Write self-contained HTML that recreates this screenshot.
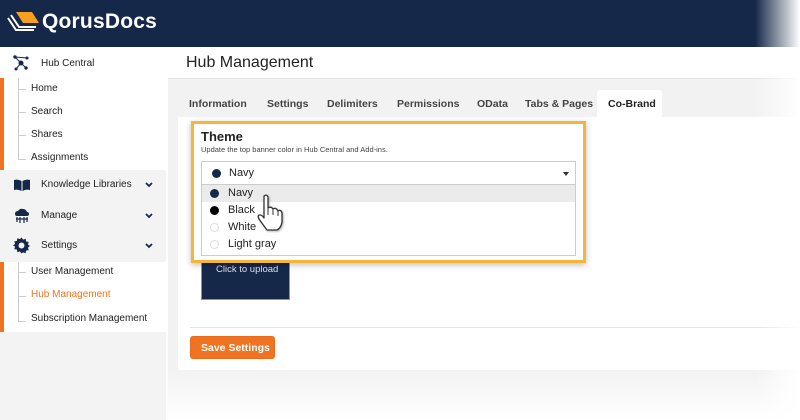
<!DOCTYPE html>
<html><head><style>
*{margin:0;padding:0;box-sizing:border-box}
body{width:800px;height:420px;overflow:hidden;background:#fff;font-family:"Liberation Sans",sans-serif;position:relative;color:#222}
.hdr{position:absolute;left:0;top:0;width:800px;height:47px;background:#15284a}
.fade{position:absolute;top:0;right:0;width:45px;height:420px;background:linear-gradient(to right,rgba(255,255,255,0),#fff);z-index:10}
.logo{position:absolute;left:42px;top:10px;color:#fff;font-size:21px;font-weight:bold;letter-spacing:.2px}
.side{position:absolute;left:0;top:48px;width:166px;height:372px;background:#f3f3f3}
.main{position:absolute;left:168px;top:48px;width:632px;height:372px;background:#f2f2f2}
.t{position:absolute;font-size:11px;color:#222;white-space:nowrap}
.side .t{font-size:10px}
.sub{position:absolute;left:0;width:166px;background:#fff}
.bar{position:absolute;left:0;width:4px;background:#f07322}
.vl{position:absolute;left:18px;width:1px;background:#ccc}
.hl{position:absolute;left:18px;width:8px;height:1px;background:#ccc}
.chev{position:absolute;left:145px}
.tab{position:absolute;top:98px;font-size:10.5px;font-weight:bold;color:#444}
.dot{position:absolute;width:9px;height:9px;border-radius:50%}
</style></head><body>
<div class="hdr"></div>
<svg style="position:absolute;left:6px;top:10px" width="34" height="26" viewBox="0 0 34 26">
<path d="M2 8 L10 20 L28 20" stroke="#fff" stroke-width="2" fill="none"/>
<path d="M5 5 L13 17 L30 17" stroke="#fff" stroke-width="2" fill="none"/>
<path d="M10 2 L26 2 L33 13 L17 13 Z" fill="#f5a021"/>
</svg>
<div class="logo">QorusDocs</div>

<div class="side">
 <div class="sub" style="top:0;height:30px"></div>
 <svg style="position:absolute;left:13px;top:7px" width="16" height="16" viewBox="0 0 16 16"><g fill="#15284a"><circle cx="8" cy="8" r="2.5"/><circle cx="2" cy="2" r="1.7"/><circle cx="14" cy="3" r="1.5"/><circle cx="3" cy="14" r="1.5"/><circle cx="13" cy="13" r="1.7"/></g><path d="M2 2L14 3M8 8L3 14M8 8L13 13M8 8L2 2" stroke="#15284a" stroke-width="1"/></svg>
 <div class="t" style="left:41px;top:10px">Hub Central</div>
 <div class="sub" style="top:30px;height:92px"></div>
 <div class="bar" style="top:30px;height:92px"></div>
 <div class="vl" style="top:30px;height:82px"></div>
 <div class="hl" style="top:41px"></div><div class="hl" style="top:64px"></div><div class="hl" style="top:87px"></div><div class="hl" style="top:111px"></div>
 <div class="t" style="left:31px;top:35px">Home</div>
 <div class="t" style="left:31px;top:58px">Search</div>
 <div class="t" style="left:31px;top:81px">Shares</div>
 <div class="t" style="left:31px;top:104px">Assignments</div>
 <svg style="position:absolute;left:14px;top:131px" width="16" height="12"><path d="M0 1 Q4 0 7.5 2 L7.5 12 Q4 10 0 11Z M16 1 Q12 0 8.5 2 L8.5 12 Q12 10 16 11Z" fill="#15284a"/></svg>
 <div class="t" style="left:41px;top:131px">Knowledge Libraries</div><svg class="chev" style="top:134px" width="8" height="6"><path d="M1 1L4 4L7 1" stroke="#15284a" stroke-width="1.8" fill="none"/></svg>
 <svg style="position:absolute;left:14px;top:160px" width="16" height="16"><path d="M3 8 Q1 8 1 6 Q1 3 4 3 Q6 0 9 1 Q12 1 13 4 Q15 4 15 6 Q15 8 13 8Z" fill="#15284a"/><path d="M3 9V14M6 9V15M10 9V15M13 9V14M2 11H14" stroke="#15284a" stroke-width="1.2"/></svg>
 <div class="t" style="left:41px;top:162px">Manage</div><svg class="chev" style="top:165px" width="8" height="6"><path d="M1 1L4 4L7 1" stroke="#15284a" stroke-width="1.8" fill="none"/></svg>
 <svg style="position:absolute;left:13px;top:189px" width="17" height="17" viewBox="0 0 16 16"><path d="M8 0.5l1.5 2 2.4-.8.4 2.5 2.5.4-.8 2.4 2 1.5-2 1.5.8 2.4-2.5.4-.4 2.5-2.4-.8L8 15.5l-1.5-2-2.4.8-.4-2.5-2.5-.4.8-2.4L0 8l2-1.5-.8-2.4 2.5-.4.4-2.5 2.4.8Z" fill="#15284a"/><circle cx="8" cy="8" r="2.8" fill="#f3f3f3"/></svg>
 <div class="t" style="left:41px;top:192px">Settings</div><svg class="chev" style="top:195px" width="8" height="6"><path d="M1 1L4 4L7 1" stroke="#15284a" stroke-width="1.8" fill="none"/></svg>
 <div class="sub" style="top:214px;height:70px"></div>
 <div class="bar" style="top:214px;height:70px"></div>
 <div class="vl" style="top:214px;height:60px"></div>
 <div class="hl" style="top:224px"></div><div class="hl" style="top:248px"></div><div class="hl" style="top:273px"></div>
 <div class="t" style="left:31px;top:218px">User Management</div>
 <div class="t" style="left:31px;top:241px;color:#f07322">Hub Management</div>
 <div class="t" style="left:31px;top:265px">Subscription Management</div>
</div>

<div class="main">
 <div style="position:absolute;left:0;top:0;width:632px;height:30px;background:#fff"></div>
 <div style="position:absolute;left:0;top:30px;width:632px;height:1px;background:#e3e3e3"></div>
 <div class="t" style="left:18px;top:6px;font-size:16px;color:#222">Hub Management</div>
 <div style="position:absolute;left:429px;top:42px;width:65px;height:28px;background:#fff;border-radius:3px 3px 0 0"></div>
 <div style="position:absolute;left:10px;top:69px;width:622px;height:253px;background:#fff;border-radius:0 0 3px 3px"></div>
 <div style="position:absolute;left:0;top:322px;width:632px;height:50px;background:linear-gradient(#f2f2f2,#fff)"></div>
</div>
<div class="tab" style="left:189px">Information</div>
<div class="tab" style="left:267px">Settings</div>
<div class="tab" style="left:327px">Delimiters</div>
<div class="tab" style="left:397px">Permissions</div>
<div class="tab" style="left:477px">OData</div>
<div class="tab" style="left:525px">Tabs &amp; Pages</div>
<div class="tab" style="left:608px;color:#222">Co-Brand</div>

<div style="position:absolute;left:201px;top:250px;width:89px;height:50px;background:#15284a;border:1px solid #8a94a8"></div>
<div class="t" style="left:216px;top:264px;font-size:9.5px;color:#dfe3ea">Click to upload</div>

<div style="position:absolute;left:191px;top:121px;width:395px;height:142px;border:3px solid #f5b53a;background:#fff;box-shadow:0 2px 6px rgba(0,0,0,.25)"></div>
<div class="t" style="left:201px;top:129px;font-size:13px;font-weight:bold">Theme</div>
<div class="t" style="left:201px;top:145px;font-size:7.5px;color:#444">Update the top banner color in Hub Central and Add-ins.</div>
<div style="position:absolute;left:201px;top:161px;width:375px;height:24px;border:1px solid #ccc;background:#fff"></div>
<div class="dot" style="left:212px;top:169px;background:#15284a"></div>
<div class="t" style="left:229px;top:167px;font-size:11px">Navy</div>
<div style="position:absolute;left:563px;top:172px;border:3px solid transparent;border-top:4px solid #333"></div>
<div style="position:absolute;left:201px;top:185px;width:375px;height:71px;border:1px solid #ccc;border-top:none;background:#fff"></div>
<div style="position:absolute;left:202px;top:185px;width:373px;height:17px;background:#ebebeb"></div>
<div class="dot" style="left:210px;top:189px;background:#15284a"></div>
<div class="dot" style="left:210px;top:206px;background:#000"></div>
<div class="dot" style="left:210px;top:223px;border:1px solid #ddd"></div>
<div class="dot" style="left:210px;top:240px;border:1px solid #ddd"></div>
<div class="t" style="left:228px;top:187px;font-size:11px">Navy</div>
<div class="t" style="left:228px;top:204px;font-size:11px">Black</div>
<div class="t" style="left:228px;top:221px;font-size:11px">White</div>
<div class="t" style="left:228px;top:238px;font-size:11px">Light gray</div>
<svg style="position:absolute;left:255px;top:193px" width="34" height="40" viewBox="0 0 34 40"><path d="M9 3 Q12 1 13 4 L13 15 Q16 13 18 16 Q21 14 23 18 Q26 16 27 20 L27 29 Q26 35 22 37 L12 37 Q9 33 4 26 Q2 22 5 22 Q7 22 9 25 Z" fill="#fff" stroke="#333" stroke-width="1.3" stroke-linejoin="round" filter="drop-shadow(1px 1px 1px rgba(0,0,0,.3))"/><path d="M13 15V22M18 16V22M23 18V23" stroke="#333" stroke-width="1"/></svg>

<div style="position:absolute;left:190px;top:327px;width:610px;height:1px;background:#e3e3e3"></div>
<div style="position:absolute;left:190px;top:336px;width:85px;height:23px;background:#f07322;border-radius:3px;border:1px solid #e86a1a"></div>
<div class="t" style="left:201px;top:342px;font-size:10.5px;color:#fff;font-weight:bold">Save Settings</div>
<div class="fade"></div>
</body></html>
